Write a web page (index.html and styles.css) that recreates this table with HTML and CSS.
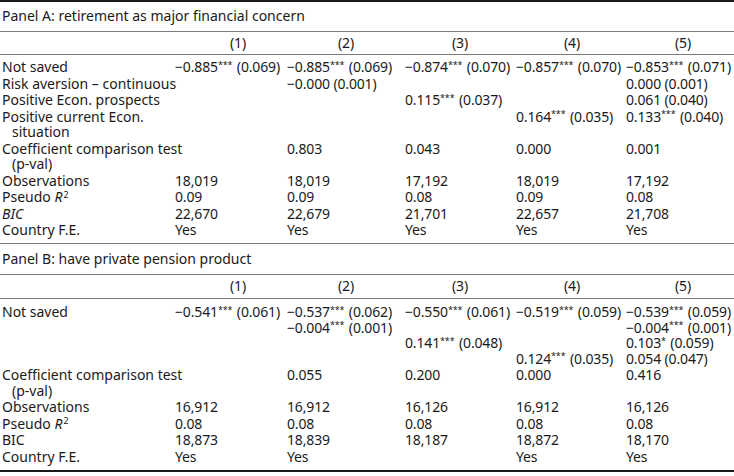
FILE: index.html
```html
<!DOCTYPE html>
<html>
<head>
<meta charset="utf-8">
<link rel="stylesheet" href="styles.css">
</head>
<body>
<table class="reg">
  <colgroup>
    <col class="c0"><col class="c1"><col class="c2"><col class="c3"><col class="c4"><col class="c5">
  </colgroup>
  <tbody class="panel panel-a">
    <tr class="title"><td colspan="6">Panel A: retirement as major financial concern</td></tr>
    <tr class="head"><td></td><td class="h1">(1)</td><td class="h2">(2)</td><td class="h3">(3)</td><td class="h4">(4)</td><td class="h5">(5)</td></tr>
    <tr class="first"><td class="lab">Not saved</td><td>−0.885<sup>***</sup> (0.069)</td><td>−0.885<sup>***</sup> (0.069)</td><td>−0.874<sup>***</sup> (0.070)</td><td>−0.857<sup>***</sup> (0.070)</td><td>−0.853<sup>***</sup> (0.071)</td></tr>
    <tr><td class="lab">Risk aversion – continuous</td><td></td><td>−0.000 (0.001)</td><td></td><td></td><td>0.000 (0.001)</td></tr>
    <tr><td class="lab">Positive Econ. prospects</td><td></td><td></td><td>0.115<sup>***</sup> (0.037)</td><td></td><td>0.061 (0.040)</td></tr>
    <tr><td class="lab">Positive current Econ.<br><span class="cont">situation</span></td><td></td><td></td><td></td><td>0.164<sup>***</sup> (0.035)</td><td>0.133<sup>***</sup> (0.040)</td></tr>
    <tr><td class="lab">Coefficient comparison test<br><span class="cont">(p-val)</span></td><td></td><td>0.803</td><td>0.043</td><td>0.000</td><td>0.001</td></tr>
    <tr><td class="lab">Observations</td><td>18,019</td><td>18,019</td><td>17,192</td><td>18,019</td><td>17,192</td></tr>
    <tr><td class="lab">Pseudo <i>R</i><sup class="sq">2</sup></td><td>0.09</td><td>0.09</td><td>0.08</td><td>0.09</td><td>0.08</td></tr>
    <tr><td class="lab"><i>BIC</i></td><td>22,670</td><td>22,679</td><td>21,701</td><td>22,657</td><td>21,708</td></tr>
    <tr class="last"><td class="lab">Country F.E.</td><td>Yes</td><td>Yes</td><td>Yes</td><td>Yes</td><td>Yes</td></tr>
  </tbody>
  <tbody class="panel panel-b">
    <tr class="title"><td colspan="6">Panel B: have private pension product</td></tr>
    <tr class="head"><td></td><td class="h1">(1)</td><td class="h2">(2)</td><td class="h3">(3)</td><td class="h4">(4)</td><td class="h5">(5)</td></tr>
    <tr class="first"><td class="lab">Not saved</td><td>−0.541<sup>***</sup> (0.061)</td><td>−0.537<sup>***</sup> (0.062)<br>−0.004<sup>***</sup> (0.001)</td><td>−0.550<sup>***</sup> (0.061)<br>&nbsp;<br>0.141<sup>***</sup> (0.048)</td><td>−0.519<sup>***</sup> (0.059)<br>&nbsp;<br>&nbsp;<br>0.124<sup>***</sup> (0.035)</td><td>−0.539<sup>***</sup> (0.059)<br>−0.004<sup>***</sup> (0.001)<br>0.103<sup>*</sup> (0.059)<br>0.054 (0.047)</td></tr>
    <tr><td class="lab">Coefficient comparison test<br><span class="cont">(p-val)</span></td><td></td><td>0.055</td><td>0.200</td><td>0.000</td><td>0.416</td></tr>
    <tr><td class="lab">Observations</td><td>16,912</td><td>16,912</td><td>16,126</td><td>16,912</td><td>16,126</td></tr>
    <tr><td class="lab">Pseudo <i>R</i><sup class="sq">2</sup></td><td>0.08</td><td>0.08</td><td>0.08</td><td>0.08</td><td>0.08</td></tr>
    <tr><td class="lab">BIC</td><td>18,873</td><td>18,839</td><td>18,187</td><td>18,872</td><td>18,170</td></tr>
    <tr class="last"><td class="lab">Country F.E.</td><td>Yes</td><td>Yes</td><td></td><td>Yes</td><td>Yes</td></tr>
  </tbody>
</table>
</body>
</html>
```

FILE: styles.css
```css
html, body {
  margin: 0;
  padding: 0;
  background: #ffffff;
  overflow: hidden;
}

body {
  font-family: "Noto Sans", "Open Sans", sans-serif;
  font-size: 14px;
  color: #1a1a1a;
}

.reg {
  width: 734px;
  border-collapse: collapse;
  table-layout: fixed;
  border-top: 2px solid #1a1a1a;
  border-bottom: 2px solid #1a1a1a;
}

.c0 { width: 173px; }
.c1 { width: 112px; }
.c2 { width: 118px; }
.c3 { width: 111px; }
.c4 { width: 110px; }
.c5 { width: 110px; }

.reg td {
  padding: 0.5px 0 0.5px 2px;
  line-height: 15.5px;
  vertical-align: top;
  white-space: nowrap;
  letter-spacing: -0.15px;
}

.reg td.lab,
.title td {
  letter-spacing: 0;
}

.title td {
  line-height: 16px;
  padding-top: 6px;
  padding-bottom: 7px;
  border-bottom: 1px solid #7a7a7a;
}

.panel-b .title td {
  padding-top: 6.5px;
  padding-bottom: 7.5px;
}

.head td {
  line-height: 16px;
  padding-top: 3px;
  padding-bottom: 3px;
  border-bottom: 1px solid #7a7a7a;
}

.panel-b .head td {
  padding-bottom: 4px;
}

.head .h1 { padding-left: 57px; }
.head .h2 { padding-left: 53px; }
.head .h3 { padding-left: 49px; }
.head .h4 { padding-left: 50px; }
.head .h5 { padding-left: 51px; }

.first td {
  padding-top: 4px;
}

.panel-b .first td {
  padding-top: 5px;
}

.last td {
  padding-bottom: 5.5px;
}

.panel-a .last td {
  border-bottom: 1px solid #7a7a7a;
}

.lab .cont {
  padding-left: 10px;
}

sup {
  font-size: 9px;
  line-height: 0;
  vertical-align: 4.5px;
  margin-right: 1px;
}

sup.sq {
  margin-left: 1px;
  margin-right: 0;
}
```
